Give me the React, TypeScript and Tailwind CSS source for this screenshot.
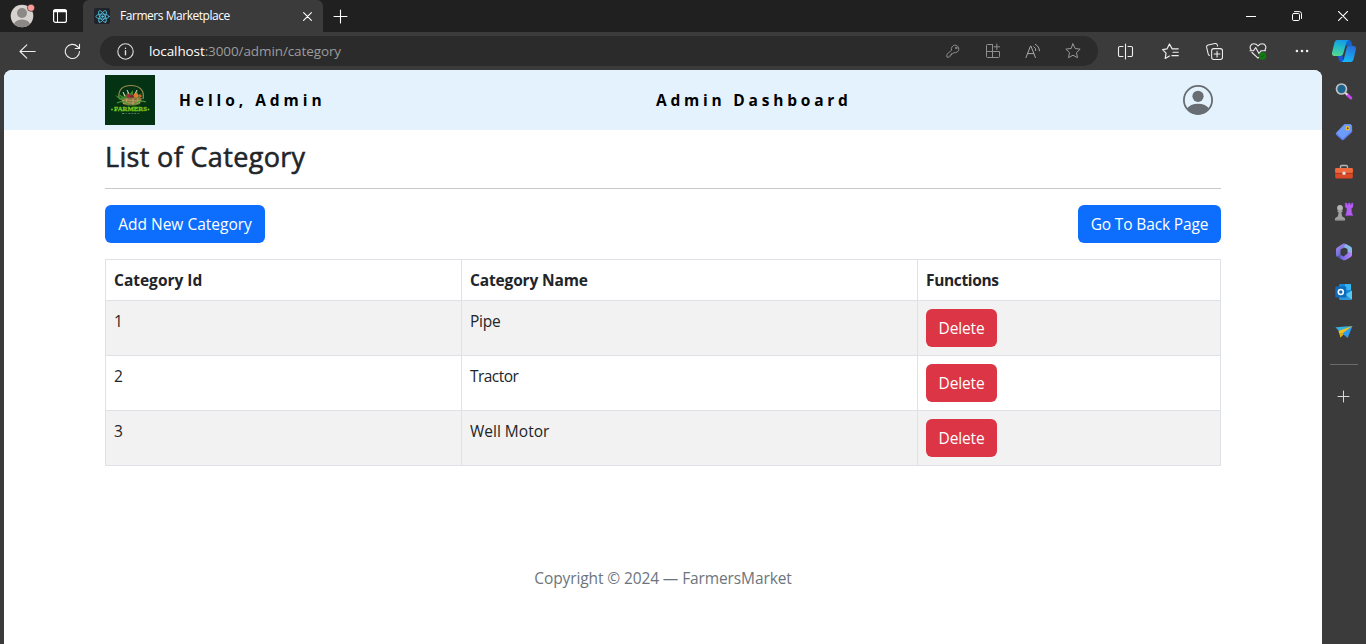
import type { ReactNode } from "react";

type IconProps = { size: number; box?: number; children: ReactNode; className?: string };

function Icon({ size, box = 16, children, className = "" }: IconProps) {
  return (
    <svg
      width={size}
      height={size}
      viewBox={`0 0 ${box} ${box}`}
      fill="none"
      stroke="currentColor"
      strokeLinecap="round"
      strokeLinejoin="round"
      className={`block shrink-0 ${className}`}
    >
      {children}
    </svg>
  );
}

function Slot({ className, children }: { className: string; children: ReactNode }) {
  return <div className={`flex shrink-0 items-center justify-center ${className}`}>{children}</div>;
}

const STAR = "M8 .9l2.15 4.6 5 .65-3.65 3.5.95 5L8 12.2l-4.45 2.45.95-5L.85 6.15l5-.65z";

function TitleBar() {
  return (
    <div className="flex h-8 bg-[#202020] text-white">
      <div className="flex w-[83px] items-center">
        <Slot className="ml-[10px] w-6">
          <svg width="26" height="26" viewBox="0 0 26 26" className="block shrink-0">
            <defs>
              <clipPath id="face"><circle cx="13" cy="13" r="11.2" /></clipPath>
            </defs>
            <circle cx="13" cy="13" r="11.3" fill="#d5d2cf" />
            <g clipPath="url(#face)" fill="#8b8886">
              <circle cx="13" cy="10" r="5" />
              <ellipse cx="13" cy="22" rx="8" ry="5.5" />
            </g>
            <circle cx="22" cy="4.8" r="3.6" fill="#ff9e99" stroke="#202020" strokeWidth=".6" />
          </svg>
        </Slot>
        <Slot className="ml-[19px] w-[14px]">
          <Icon size={14} box={14}>
            <rect x=".6" y=".6" width="12.8" height="12.8" rx="2" strokeWidth="1.2" />
            <path d="M1 2.4h12M1 1.5h12" strokeWidth="1.6" />
            <path d="M4.5 3v10" strokeWidth="1" />
          </Icon>
        </Slot>
      </div>
      <div className="flex w-[240px] items-center rounded-t-md bg-[#3b3b3b]">
        <Slot className="ml-[11px] h-4 w-4 rounded-[2px] bg-[#20232a]">
          <Icon size={15} className="text-[#53c1de]">
            <g strokeWidth=".9">
              <ellipse cx="8" cy="8" rx="7" ry="2.7" />
              <ellipse cx="8" cy="8" rx="7" ry="2.7" transform="rotate(60 8 8)" />
              <ellipse cx="8" cy="8" rx="7" ry="2.7" transform="rotate(120 8 8)" />
              <circle cx="8" cy="8" r=".9" fill="currentColor" />
            </g>
          </Icon>
        </Slot>
        <span className="ml-[10px] w-[178px] whitespace-nowrap text-[12px] leading-4 tracking-[-0.46px]">
          Farmers Marketplace
        </span>
        <Icon size={9} box={9} className="ml-[5px]"><path d="M.6.6l7.8 7.8M8.4.6L.6 8.4" strokeWidth="1.1" /></Icon>
      </div>
      <Slot className="w-[35px]">
        <Icon size={15} box={15}><path d="M7.5 1v13M1 7.5h13" strokeWidth="1.1" /></Icon>
      </Slot>
      <div className="grow" />
      <Slot className="w-[46px]">
        <Icon size={10} box={10}><path d="M0 5.5h10" strokeWidth="1" /></Icon>
      </Slot>
      <Slot className="w-[46px]">
        <Icon size={10} box={10}>
          <rect x=".5" y="2.5" width="7" height="7" rx="1.2" />
          <path d="M2.5.6h4.8A2.2 2.2 0 0 1 9.5 2.8v4.7" />
        </Icon>
      </Slot>
      <Slot className="w-[46px]">
        <Icon size={10} box={10}><path d="M.3.3l9.4 9.4M9.7.3L.3 9.7" strokeWidth="1.1" /></Icon>
      </Slot>
    </div>
  );
}

function AddressBar() {
  return (
    <div className="flex h-[30px] w-[998px] shrink-0 items-center rounded-full bg-[#2b2b2b] text-[#a0a0a0]">
      <Slot className="ml-[17px] w-[17px]">
        <Icon size={17} box={17} className="text-[#dedede]">
          <circle cx="8.5" cy="8.5" r="7.7" strokeWidth="1.1" />
          <path d="M8.5 7.8v4M8.5 5.2v.2" strokeWidth="1.4" />
        </Icon>
      </Slot>
      <span className="ml-[15px] grow whitespace-nowrap text-[13.5px] leading-5 tracking-[-0.1px] text-[#9c9c9c]">
        <span className="text-white">localhost</span>:3000/admin/category
      </span>
      <Slot className="w-10">
        <Icon size={14} className="text-[#9a9a9a]">
          <path d="M6.2 6.8a4.3 4.3 0 1 1 3 3L7.8 11H6.3v1.5H4.8V14l-1 1H1v-2.8z" />
          <circle cx="11.6" cy="4.5" r=".9" />
        </Icon>
      </Slot>
      <Slot className="w-10">
        <Icon size={16} className="text-[#8f8f8f]">
          <path d="M7.5 1.5h-5a1 1 0 0 0-1 1v11a1 1 0 0 0 1 1h11a1 1 0 0 0 1-1v-5h-13M7.5 1.5v13M11.8 1v5.6M9 3.8h5.6" />
        </Icon>
      </Slot>
      <Slot className="w-10">
        <Icon size={16} className="text-[#a8a8a8]">
          <path d="M1 14.5L5.5 3h.4l4.5 11.5M2.6 10.6h6.2M8.8 3.6a4 4 0 0 1 2 4M10.4 1.4a7.4 7.4 0 0 1 4 6.4" />
        </Icon>
      </Slot>
      <Slot className="mr-[5px] w-10">
        <Icon size={16} className="text-[#9a9a9a]"><path d={STAR} /></Icon>
      </Slot>
    </div>
  );
}

function ToolBar() {
  return (
    <div className="flex h-[38px] items-center bg-[#3b3b3b] text-[#eeeeee]">
      <Slot className="ml-[6px] w-[43px]">
        <Icon size={17} box={17}><path d="M16.2 8.5H1M7.8 1.8L1 8.5l6.8 6.7" strokeWidth="1.1" /></Icon>
      </Slot>
      <Slot className="ml-[2px] mr-[6px] w-[43px]">
        <Icon size={17} box={17}>
          <path d="M15.5 8.5a7.1 7.1 0 1 1-2-5l1.8 1.8M15.5 1.2v4.3h-4.3" strokeWidth="1.1" />
        </Icon>
      </Slot>
      <AddressBar />
      <Slot className="ml-[5px] w-11">
        <Icon size={17} box={17}>
          <path d="M6 3.5H2.9A1.4 1.4 0 0 0 1.5 4.9v7.2a1.4 1.4 0 0 0 1.4 1.4H6M11 3.5h3.1a1.4 1.4 0 0 1 1.4 1.4v7.2a1.4 1.4 0 0 1-1.4 1.4H11M8.5 1v15" strokeWidth="1.1" />
        </Icon>
      </Slot>
      <Slot className="ml-px w-11">
        <Icon size={17}>
          <path d="M15.3 5.5H9.6L7 .9 4.8 5.5l-4.2.7 3.2 3.4-.8 4.9L7 12.3M10.3 8.7h5M9.3 11.9h6" strokeWidth="1.1" />
        </Icon>
      </Slot>
      <Slot className="w-11">
        <Icon size={17}>
          <rect x="5.3" y="5.3" width="10.2" height="10.2" rx="2" />
          <path d="M10.4 7.7v5.4M7.7 10.4h5.4M3.2 11.8a1.8 1.8 0 0 1-1.1-1.3L.6 4.2A2 2 0 0 1 2 1.9L8.4.5a2 2 0 0 1 2.3 1.5l.2.9" />
        </Icon>
      </Slot>
      <Slot className="w-11">
        <Icon size={18} box={18}>
          <path d="M2 7.8C0 4.8 1.8 1.8 4.8 1.8c2 0 3.3 1 4.2 2.2.9-1.2 2.2-2.2 4.2-2.2 3 0 4.8 3 2.8 6M3 10.5l6 5.6 2-1.8M1 8.8h3.5l2.2-3.2 3.2 6L12 8.8h4.6" strokeWidth="1.1" />
          <circle cx="13.5" cy="14" r="3.8" fill="#107c10" stroke="none" />
          <path d="M12 14l1 1 2-2" stroke="#1a4d1a" strokeWidth=".8" />
        </Icon>
      </Slot>
      <Slot className="w-11">
        <Icon size={14} box={14}>
          <g fill="currentColor" stroke="none">
            <circle cx="1.9" cy="7" r="1.3" />
            <circle cx="7" cy="7" r="1.3" />
            <circle cx="12.1" cy="7" r="1.3" />
          </g>
        </Icon>
      </Slot>
      <Slot className="w-10">
        <svg width="26" height="24" viewBox="0 0 26 24" className="block shrink-0">
          <defs>
            <linearGradient id="cpA" x1=".5" y1="0" x2=".3" y2="1">
              <stop offset="0" stopColor="#159be5" /><stop offset=".5" stopColor="#25bfc4" /><stop offset="1" stopColor="#59d98a" />
            </linearGradient>
            <linearGradient id="cpB" x1=".7" y1="0" x2=".3" y2="1">
              <stop offset="0" stopColor="#286ddc" /><stop offset="1" stopColor="#13bdf5" />
            </linearGradient>
          </defs>
          <path d="M6 16l5-4 1.500 11h-1.500c-2.200 0-3-1.500-3.600-4z" fill="#1a56d6" />
          <path d="M13 1h4.500c2 0 2.700 1.200 3.200 3.200L21.500 7h-6z" fill="#1565c8" />
          <path d="M6.200 1h12C16 1.500 15.500 3 14.800 5.500L12.400 14c-.7 2.200-1.600 3-3.400 3H4C1.200 17 .6 15.500 1.200 13l2.200-9C4 2 4.800 1 6.200 1z" fill="url(#cpA)" />
          <path d="M17.500 7h5c2.200 0 2.900 1.500 2.400 3.700l-2.200 9C22.200 22 21.200 23 19.500 23h-9.500c2 0 2.600-2 3.200-4l2.300-9.500C15.900 7.800 16.400 7 17.500 7z" fill="url(#cpB)" />
        </svg>
      </Slot>
    </div>
  );
}

function SideBar() {
  return (
    <aside className="flex w-11 shrink-0 flex-col items-center bg-[#3b3b3b] pr-px pt-[2px]">
      <Slot className="h-10">
        <Icon size={18} box={18}>
          <path d="M12.2 11.6l3.600 3.400" stroke="#c845f0" strokeWidth="3" />
          <path d="M10.500 10l1.300 1.200" stroke="#e0e0e0" strokeWidth="2" />
          <circle cx="6.500" cy="6" r="5" fill="#1d648f" stroke="#c3c3c3" strokeWidth="1.700" />
        </Icon>
      </Slot>
      <Slot className="h-10">
        <Icon size={18} box={18}>
          <path d="M9.500 1.500H15c1 0 1.700.6 1.700 1.700v5.500L8.800 16c-.7.7-1.300.7-2 0l-5-4.500c-.7-.7-.7-1.400 0-2z" fill="#6c9bfb" stroke="#78a4ff" strokeWidth=".6" />
          <path d="M16.700 8.500L8.800 16c-.7.7-1.300.7-2 0l-5-4.500" stroke="#5f78e8" strokeWidth="1.300" />
          <circle cx="12.700" cy="5.200" r="1.600" fill="#38517f" stroke="#ffc21c" strokeWidth="1.200" />
        </Icon>
      </Slot>
      <Slot className="h-10">
        <Icon size={18} box={18}>
          <path d="M5.500 5V3.700c0-.8.5-1.200 1.200-1.200h4.600c.7 0 1.200.4 1.200 1.200V5" stroke="#b7b7b7" strokeWidth="1.300" />
          <rect x=".2" y="5" width="17.600" height="10.500" rx="1.500" fill="#d94925" stroke="none" />
          <rect x=".2" y="5" width="17.600" height="5" rx="1.300" fill="#f06a40" stroke="none" />
          <path d="M.5 10.300h17" stroke="#a23419" strokeWidth=".8" />
          <circle cx="9" cy="10.300" r="1.700" fill="#dedede" stroke="none" />
        </Icon>
      </Slot>
      <Slot className="h-10">
        <Icon size={20} box={20}>
          <path d="M11.200 2.500V1h1.800v1.500h1.300V1h1.800v1.500h1.300V1H19v4l-1.600 1.500.4 4.500 1.200 2.500h-7.500L12.600 10l.4-3.500-1.800-1.500z" fill="#b45cf4" stroke="#a146e0" strokeWidth=".4" />
          <circle cx="6" cy="6" r="2.900" fill="#b4b4b4" stroke="none" />
          <path d="M3.500 8.500h5V10l-1.200.5 1 4 2.700 1.700v2.200H1v-2.200l2.700-1.700 1-4-1.200-.5z" fill="#a0a0a0" stroke="none" />
          <path d="M2 18h8" stroke="#808080" strokeWidth=".7" />
        </Icon>
      </Slot>
      <Slot className="h-10">
        <svg width="18" height="18" viewBox="0 0 18 18" className="block">
          <defs>
            <linearGradient id="msA" x1="0" y1="0" x2=".6" y2="1"><stop stopColor="#b48af5" /><stop offset="1" stopColor="#5566cf" /></linearGradient>
            <linearGradient id="msB" x1="0" y1="0" x2="1" y2="0"><stop stopColor="#4e5fd0" /><stop offset="1" stopColor="#c084fc" /></linearGradient>
          </defs>
          <path d="M8 .8L2.600 4.300C1.600 4.900 1 5.700 1 7v5c0 1.500 1.200 2.300 2.600 1.600L5.500 12V6.500l6-3V1.200C10.500.5 9 .2 8 .8z" fill="url(#msA)" />
          <path d="M11 .9l4.500 2.600C16.500 4.100 17 4.800 17 6v5.500l-4.500-3V6L8.500 4z" fill="#86b9ea" />
          <path d="M17 10.300v1.500c0 1-.4 1.700-1.200 2.200l-5 2.900c-1 .6-2.100.6-3.100 0L2.700 14c1.300.4 2-.8 3-2.300L8.500 13.500l4-3V8.500z" fill="url(#msB)" />
        </svg>
      </Slot>
      <Slot className="h-10">
        <svg width="18" height="18" viewBox="0 0 18 18" className="block">
          <rect x="4" y="1" width="12" height="10" rx="1" fill="#1688d8" />
          <path d="M10 1h5c.6 0 1 .4 1 1v5h-6z" fill="#35b8f1" />
          <path d="M4 8l6.500 3.500L17 7.500v8c0 .8-.6 1.500-1.500 1.500h-10C4.600 17 4 16.300 4 15.500z" fill="#2b95d8" />
          <path d="M10.500 11.500L17 7.500v8c0 .4-.1.700-.3.900z" fill="#55c8f5" />
          <rect x=".3" y="3.500" width="11" height="11" rx="1" fill="#0f6cbd" />
          <circle cx="5.800" cy="9" r="2.500" fill="none" stroke="white" strokeWidth="1.500" />
        </svg>
      </Slot>
      <Slot className="h-10">
        <svg width="18" height="18" viewBox="0 0 18 18" className="block">
          <path d="M.5 4.200l17-1.200L5.200 9.500z" fill="#38b0e0" />
          <path d="M17.500 3L3.500 8 5.500 14.500 8 12z" fill="#f5c21b" />
          <path d="M8 10l-2.500 4.500L5 10z" fill="#d8a512" />
          <path d="M17.500 3L7.300 10.500l5.300 4.500z" fill="#2e9cf2" />
        </svg>
      </Slot>
      <div className="ml-px mt-3 h-px w-7 bg-[#6a6a6a]" />
      <Icon size={13} box={13} className="mt-[25px] text-[#d8d8d8]"><path d="M6.500 1v11M1 6.500h11" /></Icon>
    </aside>
  );
}

function FarmersLogo() {
  return (
    <svg width="50" height="50" viewBox="0 0 50 50" className="block shrink-0">
      <rect width="50" height="50" fill="#033312" />
      <path d="M14 23C13 14 18 10.500 26 10.500S40 15 38 24" fill="none" stroke="#9b8a55" strokeWidth="1.200" />
      <path d="M10 20l7 3-5-5 7 4-1-5 3 4 2-5 1 4 4-5v5l5-4-2 5 6-3-4 4 5-2-5 5H15z" fill="#3f8d31" />
      <path d="M18 17l2 4M22 15l2 4M32 15l-2 4" stroke="#d9e5c7" strokeWidth="1" />
      <circle cx="23.500" cy="21" r="2.200" fill="#a52a32" />
      <circle cx="27" cy="21.500" r="2" fill="#7b2338" />
      <circle cx="31" cy="20.500" r="2.400" fill="#e2782d" />
      <circle cx="35" cy="21" r="1.600" fill="#d05a2a" />
      <path d="M16 24c7-2 15-1 21-1l-2 6c-6 2-12 2-17 0z" fill="#84733f" />
      <path d="M17 26c6-3 13 2 19-1M18 28.500c6-2 11 1 17-1M22 23l-1 6M28 23v7M33 23l-1 6" stroke="#c2ad68" strokeWidth=".8" fill="none" />
      <path d="M12 28c5-3 9-1 12 2M41 27c-5-2-9 0-12 3" stroke="#4c9834" strokeWidth="1.200" fill="none" />
      <text x="25.500" y="35.800" textAnchor="middle" fill="#7bc51f" stroke="#7bc51f" strokeWidth=".3" fontSize="7" fontWeight="700" fontFamily="Liberation Serif, serif" textLength="33" lengthAdjust="spacingAndGlyphs">FARMERS</text>
      <circle cx="7" cy="34.500" r=".9" fill="#7bc51f" />
      <circle cx="43.500" cy="34.500" r=".9" fill="#7bc51f" />
      <text x="25.500" y="38.500" textAnchor="middle" fill="#b4c0ae" fontSize="2.400" fontWeight="700" fontFamily="Liberation Sans, sans-serif" textLength="17">MARKET</text>
    </svg>
  );
}

function Header() {
  return (
    <header className="flex h-[60px] items-center bg-[#e3f2fd] px-[101px] text-[15.5px] font-bold text-black">
      <FarmersLogo />
      <span className="ml-6 w-[477px] whitespace-nowrap pt-[2px] tracking-[3.95px]">Hello, Admin</span>
      <span className="grow whitespace-nowrap pt-[2px] tracking-[3.78px]">Admin Dashboard</span>
      <svg width="30" height="30" viewBox="0 0 30 30" className="mr-2 block shrink-0">
        <defs><clipPath id="person"><circle cx="15" cy="15" r="14.5" /></clipPath></defs>
        <circle cx="15" cy="15" r="14.1" fill="none" stroke="#676d72" strokeWidth="1.8" />
        <g clipPath="url(#person)" fill="#676d72">
          <circle cx="15" cy="11.3" r="5.6" />
          <path d="M3.5 24.2C6 20.5 10 18.7 15 18.7s9 1.8 11.5 5.5L22 30H8z" />
        </g>
      </svg>
    </header>
  );
}

const columns = [
  { title: "Category Id", spacing: "" },
  { title: "Category Name", spacing: "tracking-[-0.15px]" },
  { title: "Functions", spacing: "tracking-[-0.35px]" },
];

const categories = [
  { id: 1, name: "Pipe", spacing: "tracking-[-0.2px]" },
  { id: 2, name: "Tractor", spacing: "tracking-[-0.55px]" },
  { id: 3, name: "Well Motor", spacing: "" },
];

const button = "h-[38px] rounded-md px-[12px] text-[15.5px] leading-[38px] text-white whitespace-nowrap text-center";

function CategoryPage() {
  return (
    <main className="grow overflow-hidden rounded-t-lg bg-white text-[15.5px] text-[#212529]">
      <Header />
      <div className="mx-[101px]">
        <h3 className="pt-[9px] text-[27px] font-medium leading-[35px] tracking-[0.34px] [-webkit-text-stroke:0.55px_#212529]">
          List of Category
        </h3>
        <hr className="mt-[14px] border-[#c8c9ca]" />
        <div className="mt-4 flex justify-between">
          <button className={`${button} w-[160px] bg-[#0d6efd]`}>Add New Category</button>
          <button className={`${button} w-[143px] bg-[#0d6efd] tracking-[-0.14px]`}>Go To Back Page</button>
        </div>
        <table className="mt-4 w-full table-fixed border-collapse text-left leading-6">
          <colgroup>
            <col className="w-[356px]" />
            <col className="w-[456px]" />
            <col />
          </colgroup>
          <thead>
            <tr>
              {columns.map(({ title, spacing }) => (
                <th key={title} className={`h-[41px] border border-[#dee2e6] px-2 py-0 font-bold ${spacing}`}>
                  {title}
                </th>
              ))}
            </tr>
          </thead>
          <tbody>
            {categories.map(({ id, name, spacing }) => (
              <tr key={id} className="odd:bg-[#f2f2f2]">
                <td className="h-[55px] border border-[#dee2e6] px-2 pt-2 align-top">{id}</td>
                <td className={`border border-[#dee2e6] px-2 pt-2 align-top ${spacing}`}>{name}</td>
                <td className="border border-[#dee2e6] p-2 align-top">
                  <button className={`${button} block w-[71px] bg-[#dc3545] tracking-[-0.15px]`}>Delete</button>
                </td>
              </tr>
            ))}
          </tbody>
        </table>
      </div>
      <footer className="mt-[100px] text-center leading-6 tracking-[-0.11px] text-[#6c757d]">
        Copyright © 2024 — FarmersMarket
      </footer>
    </main>
  );
}

export default function App() {
  return (
    <div className="flex h-[644px] w-[1366px] flex-col overflow-hidden bg-[#3b3b3b] font-['Open_Sans','Noto_Sans',sans-serif]">
      <TitleBar />
      <ToolBar />
      <div className="flex grow pl-1">
        <CategoryPage />
        <SideBar />
      </div>
    </div>
  );
}
